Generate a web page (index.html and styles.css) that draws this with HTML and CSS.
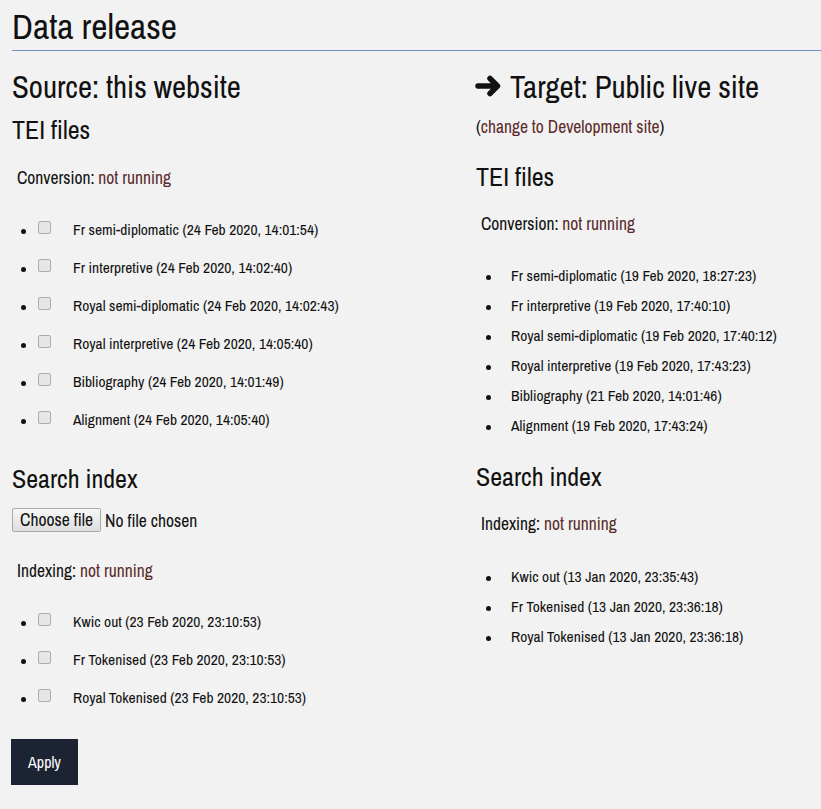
FILE: index.html
```html
<!DOCTYPE html>
<html>
<head>
<meta charset="utf-8">
<title>Data release</title>
<link rel="stylesheet" href="styles.css">
</head>
<body>
<h1 class="page-title">Data release</h1>
<form class="release">
  <div class="col col-source">
    <h2 class="col-title">Source: this website</h2>
    <h3 class="sec-title">TEI files</h3>
    <p class="status">Conversion: <a href="#">not running</a></p>
    <ul class="items items-check">
      <li><span class="cb"></span><span class="txt">Fr semi-diplomatic (24 Feb 2020, 14:01:54)</span></li>
      <li><span class="cb"></span><span class="txt">Fr interpretive (24 Feb 2020, 14:02:40)</span></li>
      <li><span class="cb"></span><span class="txt">Royal semi-diplomatic (24 Feb 2020, 14:02:43)</span></li>
      <li><span class="cb"></span><span class="txt">Royal interpretive (24 Feb 2020, 14:05:40)</span></li>
      <li><span class="cb"></span><span class="txt">Bibliography (24 Feb 2020, 14:01:49)</span></li>
      <li><span class="cb"></span><span class="txt">Alignment (24 Feb 2020, 14:05:40)</span></li>
    </ul>
    <h3 class="sec-title sec-search">Search index</h3>
    <div class="file-row"><span class="file-btn">Choose file</span><span class="file-name">No file chosen</span></div>
    <p class="status status-index">Indexing: <a href="#">not running</a></p>
    <ul class="items items-check items-index">
      <li><span class="cb"></span><span class="txt">Kwic out (23 Feb 2020, 23:10:53)</span></li>
      <li><span class="cb"></span><span class="txt">Fr Tokenised (23 Feb 2020, 23:10:53)</span></li>
      <li><span class="cb"></span><span class="txt">Royal Tokenised (23 Feb 2020, 23:10:53)</span></li>
    </ul>
    <button type="button" class="apply">Apply</button>
  </div>
  <div class="col col-target">
    <h2 class="col-title"><svg class="arrow" viewBox="0 0 27 22" width="27" height="22"><path d="M3 11 H22 M15 3.5 L22.5 11 L15 18.5" /></svg>Target: Public live site</h2>
    <p class="switch">(<a href="#">change to Development site</a>)</p>
    <h3 class="sec-title sec-tei">TEI files</h3>
    <p class="status">Conversion: <a href="#">not running</a></p>
    <ul class="items items-plain">
      <li>Fr semi-diplomatic (19 Feb 2020, 18:27:23)</li>
      <li>Fr interpretive (19 Feb 2020, 17:40:10)</li>
      <li>Royal semi-diplomatic (19 Feb 2020, 17:40:12)</li>
      <li>Royal interpretive (19 Feb 2020, 17:43:23)</li>
      <li>Bibliography (21 Feb 2020, 14:01:46)</li>
      <li>Alignment (19 Feb 2020, 17:43:24)</li>
    </ul>
    <h3 class="sec-title sec-search">Search index</h3>
    <p class="status">Indexing: <a href="#">not running</a></p>
    <ul class="items items-plain items-index">
      <li>Kwic out (13 Jan 2020, 23:35:43)</li>
      <li>Fr Tokenised (13 Jan 2020, 23:36:18)</li>
      <li>Royal Tokenised (13 Jan 2020, 23:36:18)</li>
    </ul>
  </div>
</form>
</body>
</html>
```
FILE: styles.css
```css
html, body {
  margin: 0;
  padding: 0;
  background: #f2f2f2;
}
body {
  font-family: "Liberation Sans Narrow", "Archivo Narrow", "DejaVu Sans Condensed", "Liberation Sans", sans-serif;
  color: #111;
  padding-left: 12px;
}
a {
  color: #5b2b2b;
  text-decoration: none;
}
.page-title {
  margin: 0;
  padding-top: 6px;
  font-size: 35.5px;
  font-weight: normal;
  line-height: 40px;
  padding-bottom: 4px;
  border-bottom: 1px solid #6e8fc4;
}
.release {
  display: grid;
  grid-template-columns: 464px 1fr;
}
.col-title {
  margin: 18px 0 0;
  font-size: 30.8px;
  font-weight: normal;
  line-height: 36px;
  display: flex;
  align-items: center;
  gap: 8px;
}
.arrow {
  width: 27px;
  height: 22px;
  margin-left: -1px;
  margin-top: -3px;
  fill: none;
  stroke: #111;
  stroke-width: 5.5;
  stroke-linecap: round;
  stroke-linejoin: round;
}
.sec-title {
  margin: 10px 0 0;
  font-size: 26px;
  font-weight: normal;
  line-height: 30px;
}
.status {
  margin: 23px 0 0 5px;
  font-size: 17.5px;
  line-height: 20px;
}
.items {
  margin: 32px 0 0;
  padding: 0 0 0 9px;
  font-size: 15.5px;
  list-style: none;
}
.items li {
  display: flex;
  align-items: flex-start;
  line-height: 20px;
}
.items li::before {
  content: "";
  flex: none;
  width: 5px;
  height: 5px;
  border-radius: 50%;
  background: #111;
  margin-top: 9px;
}
.items-check li {
  height: 38px;
}
.items-check li::before {
  margin-right: 12px;
}
.cb {
  flex: none;
  width: 11px;
  height: 11px;
  border: 1px solid #adadad;
  border-radius: 2px;
  background: #e6e6e6;
  margin-top: 1px;
  margin-right: 22px;
}
.sec-search {
  margin-top: 16px;
}
.file-row {
  margin-top: 14px;
  display: flex;
  align-items: center;
  gap: 4px;
  font-size: 17.6px;
}
.file-btn {
  display: inline-block;
  padding: 1px 7px;
  line-height: 20px;
  border: 1px solid #a9a9a9;
  border-radius: 2px;
  background: linear-gradient(#f7f7f7, #dedede);
}
.col-source .status-index {
  margin-top: 29px;
}
.col-source .items-index {
  margin-top: 31px;
}
.apply {
  display: block;
  margin-top: 13px;
  margin-left: -1px;
  width: 67px;
  height: 46px;
  background: #1c2333;
  color: #fff;
  border: none;
  font-family: inherit;
  font-size: 16px;
  padding: 0;
}
.switch {
  margin: 12px 0 0;
  font-size: 17.5px;
  line-height: 20px;
}
.items-plain {
  padding-left: 10px;
}
.items-plain li {
  height: 30px;
}
.items-plain li::before {
  margin-right: 20px;
}
.col-target .sec-tei {
  margin-top: 25px;
}
.col-target .status {
  margin-top: 22px;
}
.col-target .items-index {
  margin-top: 33px;
}
```
